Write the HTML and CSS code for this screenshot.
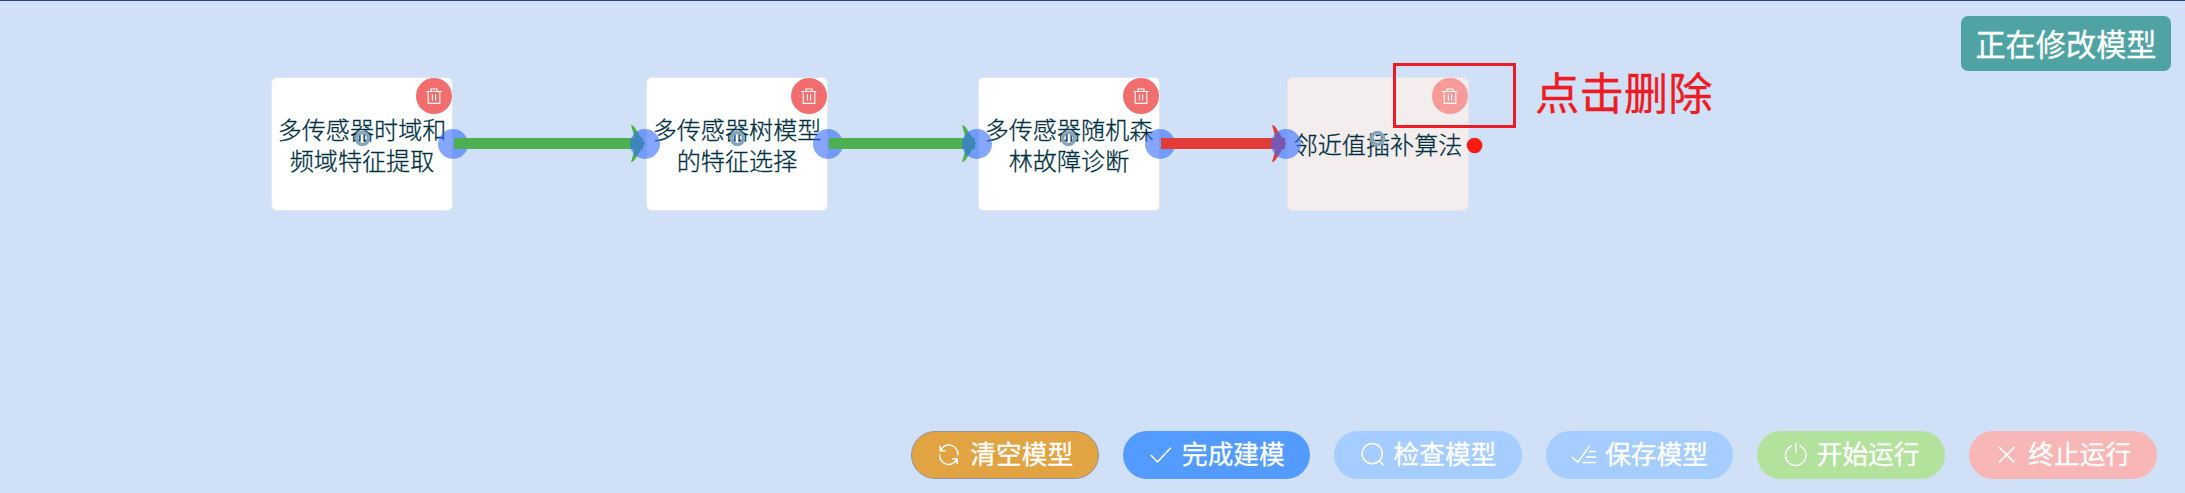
FILE: index.html
```html
<!DOCTYPE html>
<html lang="zh-CN">
<head>
<meta charset="utf-8">
<title>模型</title>
<link rel="stylesheet" href="styles.css">
</head>
<body>
<svg class="defs" aria-hidden="true">
  <symbol id="trash" viewBox="0 0 18 18"><path d="M1.2 4.5H16.8M6 4V2H12V4M3.2 4.5V16.4H14.8V4.5M7.4 7.2V13.4M10.6 7.2V13.4"/></symbol>
</svg>
<main class="canvas">
  <section class="node n1"><p>多传感器时域和频域特征提取</p><button class="del"><svg><use href="#trash"/></svg></button></section>
  <section class="node n2"><p>多传感器树模型的特征选择</p><button class="del"><svg><use href="#trash"/></svg></button></section>
  <section class="node n3"><p>多传感器随机森林故障诊断</p><button class="del"><svg><use href="#trash"/></svg></button></section>
  <section class="node n4 active"><p>邻近值插补算法</p><button class="del"><svg><use href="#trash"/></svg></button></section>
  <svg class="links" viewBox="0 0 2185 493">
    <g class="rings"><circle cx="362.5" cy="138.5" r="6"/><circle cx="737.5" cy="138.5" r="6"/><circle cx="1068.5" cy="138.5" r="6"/><circle cx="1377.5" cy="138.5" r="6"/></g>
    <g class="ports"><circle cx="453" cy="144" r="15"/><circle cx="828" cy="144" r="15"/><circle cx="1160" cy="144" r="15"/></g>
    <g class="ok">
      <path d="M454 138H643V149H454ZM829 138H975V149H829Z"/>
      <path d="M631 125Q634 125 637 131L645 143.5L637 156Q634 162 631 162Q638 143.5 631 125Z"/>
      <path d="M962 125Q965 125 968 131L976 143.5L968 156Q965 162 962 162Q969 143.5 962 125Z"/>
    </g>
    <g class="bad">
      <path d="M1161 138H1285V149H1161Z"/>
      <path d="M1272 125Q1275 125 1278 131L1286 143.5L1278 156Q1275 162 1272 162Q1279 143.5 1272 125Z"/>
    </g>
    <g class="ports"><circle cx="645" cy="144" r="15"/><circle cx="977" cy="144" r="15"/><circle cx="1286" cy="144" r="15"/></g>
    <circle class="dot" cx="1474.6" cy="145.5" r="7.8"/>
  </svg>
  <div class="mark"></div>
  <div class="note">点击删除</div>
  <div class="status">正在修改模型</div>
</main>
<footer class="bar">
  <button class="btn warn"><svg viewBox="0 0 24 24"><path d="M4.2 8A8.6 8.6 0 0 1 20.6 12.5M19.8 16A8.6 8.6 0 0 1 3.4 11.5M4 3.2V8.2H9M20 20.8V15.8H15"/></svg>清空模型</button>
  <button class="btn primary"><svg viewBox="0 0 24 24"><path d="M2.5 12.2L9 18.7L21.5 5.5"/></svg>完成建模</button>
  <button class="btn off"><svg viewBox="0 0 24 24"><circle cx="11.5" cy="11" r="9.5"/><path d="M18 17.5L22.3 21.8"/></svg>检查模型</button>
  <button class="btn off"><svg viewBox="0 0 24 24"><path d="M.5 14L6.5 19L17.5 3.5M17 9H23.5M14 14.2H23.5M11 19.2H23.5"/></svg>保存模型</button>
  <button class="btn run"><svg viewBox="0 0 24 24"><path d="M8.5 3.5A9.6 9.6 0 1 0 15.5 3.5M12 .8V10"/></svg>开始运行</button>
  <button class="btn stop"><svg viewBox="0 0 24 24"><path d="M4.8 4.8L19.2 19.2M19.2 4.8L4.8 19.2"/></svg>终止运行</button>
</footer>
</body>
</html>
```
FILE: styles.css
```css
* { box-sizing: border-box; }
body {
  margin: 0;
  width: 2185px;
  height: 493px;
  overflow: hidden;
  display: flex;
  flex-direction: column;
  background: #d0e0f6;
  border-top: 1px solid #2443a3;
  font-family: "Noto Sans CJK SC", sans-serif;
}
button { border: 0; font-family: inherit; }
svg { fill: none; stroke: currentColor; }
.defs { position: absolute; width: 0; height: 0; }
.canvas { flex: 1; }
.node {
  position: absolute;
  top: 77px;
  width: 182px;
  height: 134px;
  padding: 0 5px;
  display: flex;
  align-items: center;
  justify-content: center;
  background: #fff;
  border: 1px solid #e4e7ed;
  border-radius: 6px;
}
.n1 { left: 271px; }
.n2 { left: 646px; }
.n3 { left: 978px; }
.n4 { left: 1287px; }
.node p {
  flex: none;
  margin: 0 0 1px;
  width: 169px;
  font-size: 24.1px;
  font-weight: 300;
  line-height: 31px;
  text-align: center;
  color: #00303f;
  -webkit-text-stroke: .3px #00303f;
}
.active { background: #f3eded; border-color: #e6e6ea; }
.del {
  position: absolute;
  top: 0;
  right: 0;
  width: 36px;
  height: 36px;
  padding: 0;
  border-radius: 50%;
  display: grid;
  place-items: center;
  background: #f26e6e;
  color: #fff;
}
.del svg { width: 18px; height: 18px; stroke-width: 1.1; }
.active .del { background: #f69a9a; }
.links { position: absolute; left: 0; top: 0; width: 2185px; height: 493px; stroke: none; }
.rings { stroke: #84a5bb; stroke-width: 3.6; }
.ports { fill: #336aff; fill-opacity: .6; }
.ok { fill: #4caf50; }
.bad { fill: #e33c38; }
.dot { fill: #fc1a14; }
.mark {
  position: absolute;
  left: 1393px;
  top: 63px;
  width: 123px;
  height: 65px;
  border: 3px solid #ed1c24;
}
.note {
  position: absolute;
  left: 1535px;
  top: 60px;
  font-size: 44.4px;
  line-height: 62px;
  color: #ed1c24;
  -webkit-text-stroke: .3px #ed1c24;
}
.status {
  position: absolute;
  left: 1961px;
  top: 16px;
  width: 210px;
  height: 55px;
  border-radius: 7px;
  font-size: 30.2px;
  line-height: 55px;
  text-align: center;
  background: #4fa4a3;
  color: #fff;
  -webkit-text-stroke: .3px #fff;
}
.bar {
  display: flex;
  justify-content: flex-end;
  gap: 24px;
  padding: 0 28.5px 14px 0;
}
.btn {
  width: 187.6px;
  height: 48px;
  padding: 0 0 4px;
  display: flex;
  align-items: center;
  justify-content: center;
  gap: 8.5px;
  border-radius: 24px;
  font-size: 25.7px;
  line-height: 44px;
  white-space: nowrap;
  color: #fff;
  -webkit-text-stroke: .3px #fff;
}
.btn svg { width: 25.5px; height: 25.5px; margin-top: 3px; stroke-width: 1.4; }
.warn { background: #e2a343; border: 1px solid #8f959b; }
.primary { background: #549bff; }
.off { background: #a5cdff; }
.run { background: #b2e29c; }
.stop { background: #f8b6b6; }
```
